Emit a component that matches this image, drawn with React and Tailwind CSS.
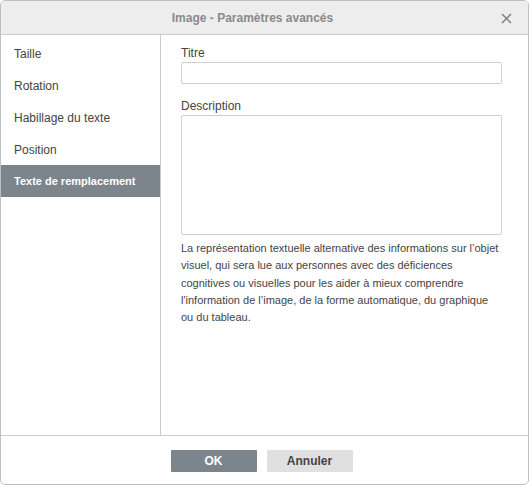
import React from 'react';

const items = ['Taille', 'Rotation', 'Habillage du texte', 'Position', 'Texte de remplacement'];

const App = () => {
  const active = 4;

  return (
    <div className="w-[529px] h-[485px] bg-white font-['Liberation_Sans',Arial,sans-serif] text-[11px] text-[#444]">
      <div className="flex flex-col h-full border border-[#c0c0c0] rounded-[5px] overflow-hidden">
        {/* Header */}
        <div className="relative h-[34px] shrink-0 flex items-center justify-center bg-[#ededed] border-b border-[#cbcbcb] pr-[24px]">
          <span className="text-[12px] font-bold text-[#8a8a8a]">Image - Paramètres avancés</span>
          <button className="absolute right-[14px] top-[9px] w-[16px] h-[16px] flex items-center justify-center">
            <svg width="11" height="11" viewBox="0 0 11 11">
              <path d="M1 1 L10 10 M10 1 L1 10" stroke="#808080" strokeWidth="1.5" />
            </svg>
          </button>
        </div>

        {/* Body */}
        <div className="flex flex-1 min-h-0">
          <div className="w-[160px] shrink-0 border-r border-[#cbcbcb] pt-[2px]">
            {items.map((label, i) => (
              <div
                key={label}
                className={`h-[32px] flex items-center pl-[13px] pt-[1px] ${
                  i === active ? 'bg-[#7d858c] text-white font-bold text-[11px]' : 'text-[#444] text-[12px]'
                }`}
              >
                {label}
              </div>
            ))}
          </div>

          <div className="flex-1 pl-[20px] pr-[26px] pt-[11px]">
            <div className="text-[12px] leading-[14px] mb-[2px]">Titre</div>
            <div className="h-[22px] border border-[#cfcfcf] rounded-[2px]" />

            <div className="text-[12px] leading-[14px] mt-[15px] mb-[2px]">Description</div>
            <div className="h-[120px] border border-[#cfcfcf] rounded-[2px]" />

            <p className="mt-[5px] leading-[17.25px] text-[#444]">
              La représentation textuelle alternative des informations sur l’objet visuel, qui sera lue aux personnes avec des déficiences cognitives ou visuelles pour les aider à mieux comprendre l'information de l’image, de la forme automatique, du graphique ou du tableau.
            </p>
          </div>
        </div>

        {/* Footer */}
        <div className="h-[49px] shrink-0 border-t border-[#cbcbcb] flex items-start justify-center gap-[10px] pt-[14px] pr-[6px]">
          <button className="w-[86px] h-[22px] bg-[#7d858c] text-white font-bold text-[12px] rounded-[1px]">OK</button>
          <button className="w-[86px] h-[22px] bg-[#e0e0e0] text-[#444] font-bold text-[12px] rounded-[1px]">Annuler</button>
        </div>
      </div>
    </div>
  );
};

export default App;
